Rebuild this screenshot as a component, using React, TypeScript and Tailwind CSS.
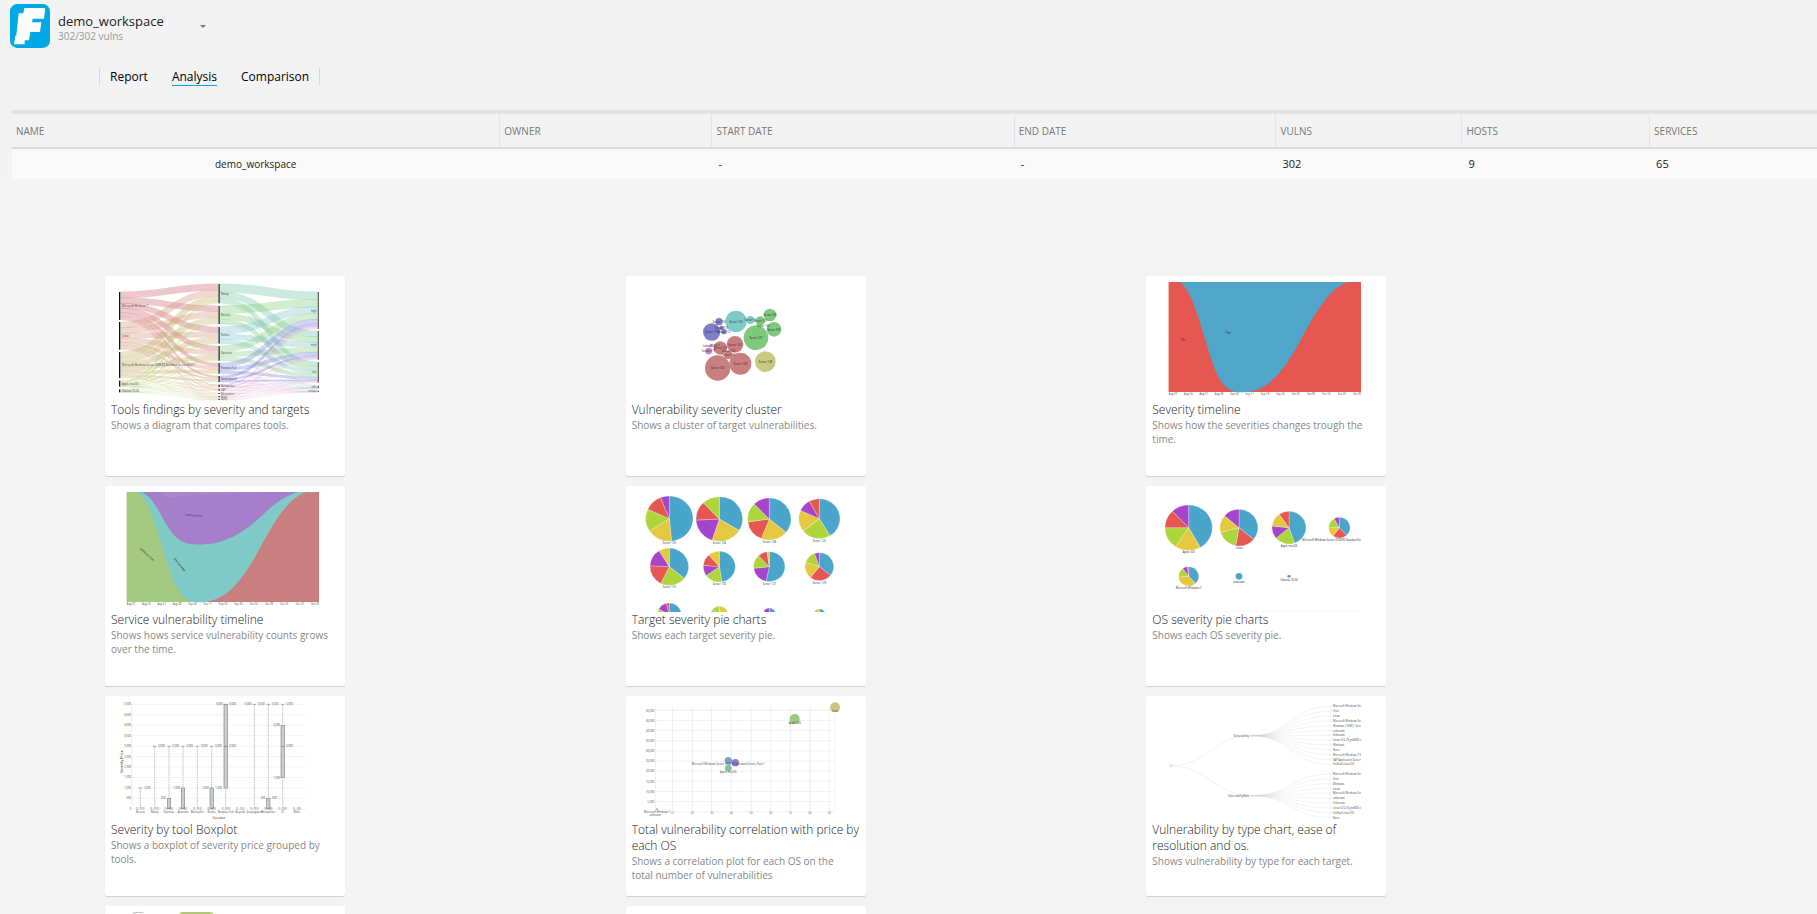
import type { ReactNode } from "react";

const BLUE = "#4aa5ca";
const YELLOW = "#e3c840";
const GREEN = "#aed53a";
const RED = "#e65751";
const PURPLE = "#a545c9";

type LabelProps = {
  x: number;
  y: number;
  children: ReactNode;
  anchor?: "start" | "middle" | "end";
  size?: number;
  rotate?: number;
  fill?: string;
};

function Label({ x, y, children, anchor = "start", size = 9, rotate = 0, fill = "#444" }: LabelProps) {
  return (
    <text
      x={x}
      y={y}
      fontSize={size}
      textAnchor={anchor}
      fill={fill}
      transform={rotate ? `rotate(${rotate} ${x} ${y})` : undefined}
    >
      {children}
    </text>
  );
}

/* Sankey diagram: operating system -> tool -> severity */
type Span = [number, number];
const sources: Span[] = [[66, 150], [156, 239], [246, 324], [332, 350], [358, 367]];
const tools: Span[] = [
  [42, 100], [108, 162], [171, 221], [228, 272], [279, 311], [318, 336],
  [344, 351], [356, 362], [369, 372], [378, 382], [386, 390],
];
const severities: Span[] = [[66, 177], [183, 269], [276, 338], [347, 355], [362, 366]];
const sourceColors = ["#cf6f78", "#d79a82", "#c9b672", "#b9cf6a", "#a9d070"];
const toolColors = [
  "#79cba8", "#86cc84", "#86c9cf", "#90d08a", "#8593dc", "#8a7be0",
  "#c987d8", "#d79ad0", "#d79ab8", "#d9a9b0", "#d9b0b8",
];

function flows(from: Span[], to: Span[], x1: number, x2: number, colors: string[]) {
  const size = (s: Span) => s[1] - s[0];
  const totalTo = to.reduce((a, s) => a + size(s), 0);
  const totalFrom = from.reduce((a, s) => a + size(s), 0);
  const toOffset = to.map((s) => s[0]);
  const mid = (x1 + x2) / 2;
  return from.flatMap((f, i) => {
    let y = f[0];
    return to.map((t, j) => {
      const a = (size(f) * size(t)) / totalTo;
      const b = (size(f) * size(t)) / totalFrom;
      const startY = y + a / 2;
      const endY = toOffset[j] + b / 2;
      y += a;
      toOffset[j] += b;
      return (
        <path
          key={`${i}-${j}`}
          d={`M${x1} ${startY}C${mid} ${startY} ${mid} ${endY} ${x2} ${endY}`}
          fill="none"
          stroke={colors[i]}
          strokeOpacity={0.38}
          strokeWidth={Math.max(1, (a + b) * 0.58)}
        />
      );
    });
  });
}

function Sankey() {
  const left = ["Microsoft Windows 7", "Linux", "Microsoft Windows Server 2008 R2 Standard Service Pack 1", "Apple macOS", "Ubuntu 16.04"];
  const middle = ["Nmap", "Nessus", "Retina", "Openvas", "NexposeFull", "Qualysguard", "Netsparker", "ZAP", "Metasploit", "Nikto", "Burp"];
  const right = ["high", "med", "low", "info", "critical"];
  return (
    <>
      {flows(sources, tools, 62, 355, sourceColors)}
      {flows(tools, severities, 360, 653, toolColors)}
      {sources.map(([a, b]) => <rect key={a} x={57} y={a} width={4} height={b - a} fill="#111" />)}
      {tools.map(([a, b]) => <rect key={a} x={355} y={a} width={5} height={b - a} fill="#555" />)}
      {severities.map(([a, b]) => <rect key={a} x={653} y={a} width={4} height={b - a} fill="#666" />)}
      {left.map((t, i) => <Label key={t} x={66} y={(sources[i][0] + sources[i][1]) / 2 + 3} size={8}>{t}</Label>)}
      {middle.map((t, i) => <Label key={t} x={363} y={(tools[i][0] + tools[i][1]) / 2 + 3} size={8}>{t}</Label>)}
      {right.map((t, i) => <Label key={t} x={649} y={(severities[i][0] + severities[i][1]) / 2 + 3} size={8} anchor="end">{t}</Label>)}
    </>
  );
}

/* Bubble cluster */
const bubbles: [number, number, number, string, string][] = [
  [348, 154, 32, "#7fc9c7", "Server 120"],
  [275, 186, 26, "#7f7fc9", "Server 110"],
  [297, 155, 11, "#7f7fc9", "Server 114"],
  [305, 174, 7, "#7f7fc9", "Server 115"],
  [312, 185, 8, "#7f7fc9", "Server 112"],
  [391, 150, 12, "#7fc9c7", "Server 14"],
  [421, 153, 14, "#7fc97f", "Server 131"],
  [450, 135, 19, "#7fc97f", "Server 130"],
  [462, 178, 22, "#7fc97f", "Server 163"],
  [408, 203, 37, "#7fc97f", "Server 127"],
  [345, 223, 25, "#c97f7f", "Server 122"],
  [301, 234, 20, "#c97f7f", "Server 124"],
  [325, 255, 13, "#c97f7f", "Server 135"],
  [273, 227, 5, "#c97fc9", "Ludus 1681.7"],
  [266, 243, 10, "#cb7fcb", "Server 177"],
  [293, 294, 38, "#c97f7f", "Server 123"],
  [361, 281, 33, "#c97f7f", "Server 129"],
  [436, 275, 31, "#c9c97f", "Server 128"],
];

function Cluster() {
  return (
    <>
      {bubbles.map(([x, y, r, c]) => <circle key={`${x}-${y}`} cx={x} cy={y} r={r} fill={c} />)}
      {bubbles.map(([x, y, , , t]) => <Label key={t} x={x} y={y + 4} anchor="middle" size={8} fill="#222">{t}</Label>)}
      <Label x={430} y={172} anchor="middle" size={8} fill="#222">Server 162</Label>
      <Label x={326} y={246} anchor="middle" size={8} fill="#222">Server 132</Label>
    </>
  );
}

/* Stacked timelines */
const dates = ["Aug 07", "Aug 14", "Aug 21", "Aug 28", "Sep 04", "Sep 11", "Sep 18", "Sep 25", "Oct 02", "Oct 09", "Oct 16", "Oct 23", "Oct 30"];

function DateAxis({ x }: { x: number }) {
  return (
    <>
      {dates.map((t, i) => (
        <Label key={t} x={x + i * 46} y={375} anchor="middle" size={8}>{t}</Label>
      ))}
    </>
  );
}

function SeverityTimeline() {
  return (
    <>
      <rect x={85} y={36} width={578} height={330} fill={RED} />
      <path
        d="M120 36C150 60 168 120 190 190C214 272 238 366 290 366C300 367 310 367 318 366C400 361 450 270 490 196C535 112 575 50 626 36Z"
        fill="#4fa6c8"
      />
      <rect x={84} y={36} width={3} height={330} fill="#fff" fillOpacity={0.4} />
      <Label x={121} y={206} rotate={32} size={8} fill="#222">high</Label>
      <Label x={255} y={188} rotate={15} size={8} fill="#222">med</Label>
      <DateAxis x={99} />
    </>
  );
}

function ServiceTimeline() {
  return (
    <>
      <rect x={79} y={36} width={578} height={330} fill="#a4c981" />
      <path d="M284 366C394 361 444 270 484 196C529 112 569 50 620 36H657V366Z" fill="#c97f7f" />
      <path
        d="M112 36C144 60 162 120 184 190C208 272 232 366 284 366C294 367 304 367 312 366C394 361 444 270 484 196C529 112 569 50 620 36Z"
        fill="#7fc9c7"
      />
      <path d="M126 36C155 50 172 85 190 118C214 160 238 193 282 193C292 194 302 194 312 193C380 191 440 150 482 110C520 74 556 45 598 36Z" fill="#a57fc9" />
      <path d="M180 36L196 52C260 48 300 44 440 38L598 36Z" fill="#fff" fillOpacity={0.06} />
      <rect x={78} y={36} width={3} height={330} fill="#fff" fillOpacity={0.4} />
      <Label x={119} y={207} rotate={42} size={8} fill="#222">(443/tcp) https</Label>
      <Label x={221} y={237} rotate={50} size={8} fill="#222">(80/tcp) www</Label>
      <Label x={255} y={107} rotate={4} size={8} fill="#222">(445/tcp) smb</Label>
      <DateAxis x={93} />
    </>
  );
}

/* Pie charts. Each slice is [end of the slice as a share of the circle, colour]. */
type Pie = { x: number; y: number; rx: number; ry: number; slices: [number, string][]; label?: string };

function PieChart({ x, y, rx, ry, slices, label }: Pie) {
  const point = (f: number) =>
    `${x + rx * Math.sin(2 * Math.PI * f)} ${y - ry * Math.cos(2 * Math.PI * f)}`;
  return (
    <g>
      {slices.length === 1 ? (
        <ellipse cx={x} cy={y} rx={rx} ry={ry} fill={slices[0][1]} />
      ) : (
        slices.map(([end, color], i) => {
          const start = i === 0 ? 0 : slices[i - 1][0];
          return (
            <path
              key={end}
              d={`M${x} ${y}L${point(start)}A${rx} ${ry} 0 ${end - start > 0.5 ? 1 : 0} 1 ${point(end)}Z`}
              fill={color}
              stroke="#fff"
              strokeOpacity={0.5}
              strokeWidth={1.5}
            />
          );
        })
      )}
      {label && <Label x={x} y={y + ry + 9} anchor="middle" size={8} fill="#222">{label}</Label>}
    </g>
  );
}

const targetPies: Pie[] = [
  { x: 148, y: 116, rx: 71, ry: 68, label: "Server 125", slices: [[0.485, BLUE], [0.656, YELLOW], [0.818, GREEN], [0.94, RED], [1, PURPLE]] },
  { x: 298, y: 117, rx: 70, ry: 67, label: "Server 124", slices: [[0.337, BLUE], [0.55, YELLOW], [0.742, PURPLE], [0.88, RED], [1, GREEN]] },
  { x: 448, y: 117, rx: 65, ry: 63, label: "Server 128", slices: [[0.36, BLUE], [0.56, YELLOW], [0.728, RED], [0.877, GREEN], [1, PURPLE]] },
  { x: 598, y: 116, rx: 62, ry: 60, label: "Server 122", slices: [[0.413, BLUE], [0.643, GREEN], [0.818, YELLOW], [0.919, PURPLE], [1, RED]] },
  { x: 148, y: 260, rx: 58, ry: 56, label: "Server 121", slices: [[0.359, BLUE], [0.573, GREEN], [0.758, RED], [0.912, PURPLE], [1, YELLOW]] },
  { x: 298, y: 260, rx: 48, ry: 46, label: "Server 130", slices: [[0.475, BLUE], [0.653, GREEN], [0.764, PURPLE], [0.888, RED], [1, YELLOW]] },
  { x: 448, y: 260, rx: 47, ry: 45, label: "Server 127", slices: [[0.533, BLUE], [0.733, PURPLE], [0.878, GREEN], [0.976, RED], [1, YELLOW]] },
  { x: 598, y: 260, rx: 43, ry: 42, label: "Server 129", slices: [[0.356, BLUE], [0.608, RED], [0.803, YELLOW], [0.947, GREEN], [1, PURPLE]] },
  { x: 148, y: 404, rx: 36, ry: 35, slices: [[0.4, BLUE], [0.7, YELLOW], [0.83, GREEN], [0.96, PURPLE], [1, RED]] },
  { x: 298, y: 404, rx: 26, ry: 25, slices: [[0.4, YELLOW], [0.84, BLUE], [1, GREEN]] },
  { x: 448, y: 404, rx: 20, ry: 20, slices: [[0.5, BLUE], [0.84, YELLOW], [1, PURPLE]] },
  { x: 598, y: 404, rx: 18, ry: 18, slices: [[0.5, BLUE], [0.82, PURPLE], [1, YELLOW]] },
];

const osPies: Pie[] = [
  { x: 146, y: 143, rx: 71, ry: 68, label: "Apple iOS", slices: [[0.418, BLUE], [0.592, YELLOW], [0.75, GREEN], [0.88, RED], [1, PURPLE]] },
  { x: 297, y: 143, rx: 57, ry: 55, label: "Linux", slices: [[0.361, BLUE], [0.528, RED], [0.71, GREEN], [0.863, YELLOW], [1, PURPLE]] },
  { x: 447, y: 143, rx: 51, ry: 49, label: "Apple macOS", slices: [[0.448, BLUE], [0.638, GREEN], [0.766, PURPLE], [0.903, YELLOW], [1, RED]] },
  { x: 598, y: 143, rx: 32, ry: 31, slices: [[0.38, BLUE], [0.6, RED], [0.75, YELLOW], [0.92, GREEN], [1, PURPLE]] },
  { x: 146, y: 289, rx: 30, ry: 29, label: "Microsoft Windows 7", slices: [[0.38, BLUE], [0.74, YELLOW], [0.9, GREEN], [0.98, PURPLE], [1, RED]] },
  { x: 297, y: 289, rx: 10, ry: 10, label: "unknown", slices: [[1, BLUE]] },
  { x: 447, y: 289, rx: 5, ry: 4, label: "Ubuntu 16.04", slices: [[1, BLUE]] },
];

function OsPies() {
  return (
    <>
      {osPies.map((p) => <PieChart key={`${p.x}-${p.y}`} {...p} />)}
      <Label x={487} y={182} size={8} fill="#222">Microsoft Windows Server 2008 R2 Standard Se</Label>
      <path d="M62 394H664" stroke="#f4f4f4" strokeWidth={2} />
    </>
  );
}

/* Box plot */
const whiskers: [number, number, string][] = [
  [121, 294, "1,000"], [164, 169, "3,000"], [207, 169, "3,000"], [249, 169, "3,000"], [292, 169, "3,000"],
  [335, 169, "3,000"], [377, 43, "5,000"], [463, 43, "5,000"], [505, 43, "5,000"], [548, 43, "5,000"],
];
const boxes: [number, number, number][] = [
  [207, 325, 356], [249, 294, 356], [335, 294, 356], [377, 43, 294], [505, 325, 356], [548, 106, 263],
];
const boxTools = ["Nessus", "Nmap", "Openvas", "Acunetix", "Metasploit", "Retina", "Nexpose Full", "Beyond", "Qualysguard", "Netsparker", "X1", "Nikto"];

function BoxPlot() {
  return (
    <>
      {Array.from({ length: 11 }, (_, i) => 43 + i * 31.3).map((y, i) => (
        <g key={y}>
          <path d={`M95 ${y}H620`} stroke="#efefef" strokeWidth={2} />
          <Label x={93} y={y + 3} size={8} anchor="end">{(5000 - i * 500).toLocaleString("en-US")}</Label>
        </g>
      ))}
      <path d="M95 43V356" stroke="#e2e2e2" strokeWidth={2} />
      {whiskers.map(([x, y, t]) => (
        <g key={x}>
          <path d={`M${x} ${y}V356`} stroke="#8a8a8a" strokeWidth={1.5} strokeDasharray="5 2" />
          <path d={`M${x - 5} ${y}h10`} stroke="#888" strokeWidth={2} />
          <Label x={x + 10} y={y + 3} size={8}>{t}</Label>
        </g>
      ))}
      {boxes.map(([x, a, b]) => (
        <rect key={x} x={x - 5} y={a} width={10} height={b - a} fill="#ccc" stroke="#888" strokeWidth={2} />
      ))}
      <path d="M372 169h10M543 169h10" stroke="#777" strokeWidth={2} />
      <Label x={387} y={172} size={8}>3,000</Label>
      <Label x={558} y={172} size={8}>3,000</Label>
      <Label x={368} y={46} size={8} anchor="end">5,000</Label>
      <Label x={454} y={46} size={8} anchor="end">5,000</Label>
      <Label x={240} y={297} size={8} anchor="end">1,000</Label>
      <Label x={326} y={297} size={8} anchor="end">1,000</Label>
      <Label x={346} y={297} size={8}>1,000</Label>
      <Label x={540} y={109} size={8} anchor="end">4,000</Label>
      <Label x={540} y={266} size={8} anchor="end">1,500</Label>
      <Label x={197} y={328} size={8} anchor="end">500</Label>
      <Label x={496} y={328} size={8} anchor="end">500</Label>
      <Label x={516} y={328} size={8}>500</Label>
      {boxTools.map((t, i) => (
        <g key={t}>
          <Label x={121 + i * 42.7} y={359} size={8} anchor="middle">0 – 0 0</Label>
          <Label x={121 + i * 42.7} y={370} size={8} anchor="middle">{t}</Label>
        </g>
      ))}
      <Label x={357} y={388} size={11} anchor="middle" fill="#222">Creator</Label>
      <Label x={68} y={215} size={11} anchor="middle" rotate={-90} fill="#222">Severity Price</Label>
    </>
  );
}

/* Correlation plot */
function Correlation() {
  const columns = [106, 157, 217, 275, 334, 393, 452, 511, 570, 628];
  return (
    <>
      {columns.map((x, i) => (
        <g key={x}>
          <path d={`M${x} 50V365`} stroke="#e6e6e6" strokeWidth={2} />
          {i > 0 && <Label x={x} y={373} anchor="middle" size={8}>{i * 10}</Label>}
        </g>
      ))}
      {Array.from({ length: 11 }, (_, i) => 61 + i * 30.4).map((y, i) => (
        <g key={y}>
          <path d={`M106 ${y}H644`} stroke="#ececec" strokeWidth={2} />
          {i < 10 && <Label x={103} y={y + 4} anchor="end" size={8}>{`${50 - i * 5},000`}</Label>}
        </g>
      ))}
      <path d="M644 50V365" stroke="#eee" strokeWidth={2} />
      <circle cx={645} cy={52} r={15} fill="#cfc583" />
      <circle cx={524} cy={87} r={15} fill="#96cd82" />
      <circle cx={325} cy={212} r={11} fill="#78a6cb" />
      <circle cx={346} cy={218} r={11} fill="#9079cb" />
      <circle cx={325} cy={235} r={10} fill="#79c7a2" />
      <circle cx={111} cy={357} r={3} fill="#d79ad0" />
      <Label x={645} y={65} anchor="middle" size={8}>Linux</Label>
      <Label x={524} y={101} anchor="middle" size={8} fill="#222">Apple iOS</Label>
      <Label x={325} y={226} anchor="middle" size={8}>Microsoft Windows Server 2008 R2 Standard Service Pack 1</Label>
      <Label x={325} y={248} anchor="middle" size={8}>Apple macOS</Label>
      <Label x={111} y={370} anchor="middle" size={8}>Microsoft Windows 7</Label>
      <Label x={106} y={377} anchor="middle" size={8}>unknown</Label>
    </>
  );
}

/* Tree of vulnerabilities by type */
const upperLeaves = [
  "Microsoft Windows Ser", "Unix", "Linux", "Microsoft Windows Ser", "Windows 7 (6961, Serv", "unknown", "Unknown",
  "Linux (2.6.18_prd000 cl", "Windows", "None", "Microsoft Windows 7 S", "SAP Application Server", "Unified Linux 9.8",
];
const lowerLeaves = [
  "Microsoft Windows Ser", "Unix", "Windows", "Linux", "Microsoft Windows Ser", "unknown", "Unknown",
  "Linux (2.6.18_prd000 cl", "Unified Linux 9.8", "None",
];

function Branch({ y, top, leaves, label }: { y: number; top: number; leaves: string[]; label: string }) {
  return (
    <>
      <path d={`M93 227C200 227 225 ${y} 333 ${y}`} fill="none" stroke="#ececec" strokeWidth={2} />
      {leaves.map((t, i) => {
        const leafY = top + i * 14.5;
        return (
          <g key={i}>
            <path d={`M333 ${y}C452 ${y} 452 ${leafY} 572 ${leafY}`} fill="none" stroke="#ccc" strokeOpacity={0.35} strokeWidth={2} />
            <circle cx={572} cy={leafY} r={3} fill="#fff" stroke="#d8d8d8" />
            <Label x={579} y={leafY + 3} size={8}>{t}</Label>
          </g>
        );
      })}
      <circle cx={333} cy={y} r={3} fill="#fff" stroke="#bbb" />
      <Label x={327} y={y + 3} size={8} anchor="end">{label}</Label>
    </>
  );
}

function Tree() {
  return (
    <>
      <Branch y={137} top={49} leaves={upperLeaves} label="Vulnerability" />
      <Branch y={317} top={252} leaves={lowerLeaves} label="VulnerabilityWeb" />
      <circle cx={93} cy={227} r={4} fill="#eee" stroke="#bbb" />
      <rect x={664} y={36} width={74} height={360} fill="#fff" />
    </>
  );
}

/* Top edge of the chart that the window cuts off */
function Blocks() {
  return (
    <>
      <path d="M98 40C106 36 124 36 132 40" fill="none" stroke="#bbb" strokeWidth={3} />
      <path d="M238 40C242 37 246 36 252 36H326C332 36 336 37 340 40V380H238Z" fill="#b5c77a" />
    </>
  );
}

type Chart = { title?: string; text?: string; drawing?: ReactNode; viewBox: string };

const LEFT_VIEW = "15 18 720 378";
const VIEW = "18 18 720 378";

const charts: Chart[] = [
  { title: "Tools findings by severity and targets", text: "Shows a diagram that compares tools.", drawing: <Sankey />, viewBox: LEFT_VIEW },
  { title: "Vulnerability severity cluster", text: "Shows a cluster of target vulnerabilities.", drawing: <Cluster />, viewBox: VIEW },
  { title: "Severity timeline", text: "Shows how the severities changes trough the time.", drawing: <SeverityTimeline />, viewBox: VIEW },
  { title: "Service vulnerability timeline", text: "Shows hows service vulnerability counts grows over the time.", drawing: <ServiceTimeline />, viewBox: LEFT_VIEW },
  { title: "Target severity pie charts", text: "Shows each target severity pie.", drawing: targetPies.map((p) => <PieChart key={`${p.x}-${p.y}`} {...p} />), viewBox: VIEW },
  { title: "OS severity pie charts", text: "Shows each OS severity pie.", drawing: <OsPies />, viewBox: VIEW },
  { title: "Severity by tool Boxplot", text: "Shows a boxplot of severity price grouped by tools.", drawing: <BoxPlot />, viewBox: LEFT_VIEW },
  { title: "Total vulnerability correlation with price by each OS", text: "Shows a correlation plot for each OS on the total number of vulnerabilities", drawing: <Correlation />, viewBox: VIEW },
  { title: "Vulnerability by type chart, ease of resolution and os.", text: "Shows vulnerability by type for each target.", drawing: <Tree />, viewBox: VIEW },
  { drawing: <Blocks />, viewBox: LEFT_VIEW },
  { viewBox: VIEW },
];

function ChartCard({ title, text, drawing, viewBox }: Chart) {
  return (
    <article className="h-[200px] w-60 rounded-xs bg-white shadow-[0_1px_1px_rgba(0,0,0,0.15)]">
      <svg viewBox={viewBox} className="block w-full" aria-hidden="true">
        {drawing}
      </svg>
      <div className="px-[6px]">
        {title && <h2 className="text-[12px] leading-4 font-light text-[#222]">{title}</h2>}
        {text && <p className="pr-2 text-[10px] leading-[14px] text-[#888]">{text}</p>}
      </div>
    </article>
  );
}

const columns = [
  { name: "NAME", width: "w-[27%]" },
  { name: "OWNER", width: "w-[11.75%]" },
  { name: "START DATE", width: "w-[16.75%]" },
  { name: "END DATE", width: "w-[14.5%]" },
  { name: "VULNS", width: "w-[10.3%]" },
  { name: "HOSTS", width: "w-[10.4%]" },
  { name: "SERVICES", width: "w-auto" },
];

export default function App() {
  return (
    <div className="h-screen overflow-hidden bg-[#f4f4f4] font-['Open_Sans','Noto_Sans',sans-serif]">
      <div className="bg-[#f3f3f3]">
        <header className="flex items-start pt-1 pl-[10px]">
          <svg viewBox="0 0 120 132" className="h-11 w-10" role="img" aria-label="Faraday">
            <rect width="120" height="132" rx="22" fill="#00a9e5" />
            <path d="M43 12H106L102 44H68L66 55H94L90 84H61L57 109H44V121H12L16 95H19L26 28H40Z" fill="#fff" />
          </svg>
          <button type="button" className="ml-2 flex w-[148px] items-start justify-between pt-2 text-left">
            <span>
              <span className="block text-[13px] leading-[18px] text-[#222]">demo_workspace</span>
              <span className="block text-[10px] leading-3 text-[#999]">302/302 vulns</span>
            </span>
            <svg viewBox="0 0 6 3" className="mt-[13px] h-[3px] w-[6px]" aria-hidden="true">
              <path d="M0 0H6L3 3Z" fill="#777" />
            </svg>
          </button>
        </header>

        <nav className="mt-5 ml-[99px] flex w-fit items-center gap-6 border-x border-[#d8d8d8] px-[10px] text-[12px] leading-[17px] font-medium text-black">
          <a href="#report">Report</a>
          <a href="#analysis" aria-current="page" className="-mb-[1px] border-b border-[#00a9e5]">Analysis</a>
          <a href="#comparison">Comparison</a>
        </nav>

        <div className="mt-[25px] pl-3">
          <table className="w-full table-fixed border-separate border-spacing-0 border-t-4 border-[#e4e4e4]">
            <thead>
              <tr>
                {columns.map((c, i) => (
                  <th
                    key={c.name}
                    scope="col"
                    className={`${c.width} ${i > 0 ? "border-l border-l-[#e4e4e4]" : ""} h-[35px] border-b-2 border-b-[#dcdcdc] px-1 pt-[2px] pb-0 text-left text-[10px] font-normal text-[#777]`}
                  >
                    {c.name}
                  </th>
                ))}
              </tr>
            </thead>
            <tbody>
              <tr className="h-[30px] bg-[#f9f9f9] text-[11px] text-[#222]">
                <td className="text-center text-[10px]">demo_workspace</td>
                <td />
                <td className="px-[7px]">-</td>
                <td className="px-[7px]">-</td>
                <td className="px-[7px]">302</td>
                <td className="px-[7px]">9</td>
                <td className="px-[7px]">65</td>
              </tr>
            </tbody>
          </table>
        </div>
      </div>

      <main className="mt-[97px] grid grid-cols-3 gap-y-[10px] pr-[150px] pl-[105px]">
        {charts.map((c, i) => <ChartCard key={i} {...c} />)}
      </main>
    </div>
  );
}
